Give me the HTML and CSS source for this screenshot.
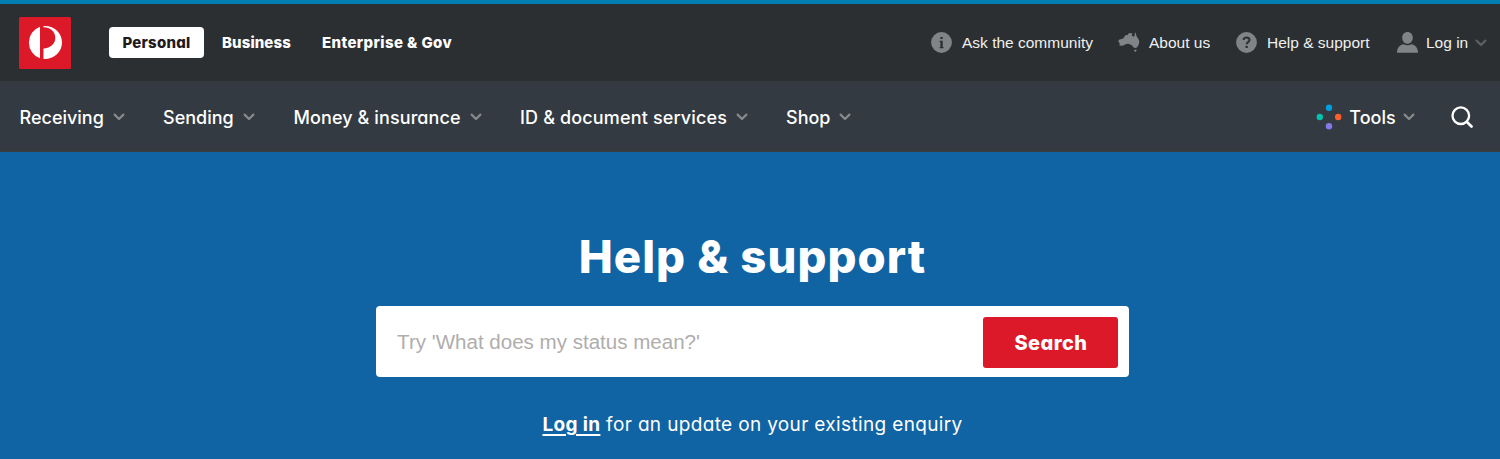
FILE: index.html
```html
<!DOCTYPE html>
<html lang="en">
<head>
<meta charset="utf-8">
<title>Help &amp; support</title>
<link rel="stylesheet" href="styles.css">
</head>
<body>
<svg class="defs" width="0" height="0" aria-hidden="true">
  <symbol id="chevron" viewBox="0 0 12 8"><path d="M1.600 1.600 6 6l4.400-4.400" fill="none" stroke="currentColor" stroke-width="2.200" stroke-linecap="round" stroke-linejoin="round"/></symbol>
</svg>
<header>
  <div class="topbar">
    <a class="logo"><svg width="52" height="52" viewBox="0 0 52 52"><rect width="52" height="52" rx="1.500" fill="#dc1928"/><path fill="#fff" d="M21 9.700a16.800 16.800 0 0 0 0 31.600ZM24.500 9C35 8.300 43 16 43 25.500S35 42.500 24.500 42.100V31.500C31.500 31 36.300 27 36.300 21 36.300 14.500 31.500 10.300 24.500 10.300Z"/></svg></a>
    <nav class="segments">
      <a class="segment active"><span>Personal</span></a>
      <a class="segment business"><span>Business</span></a>
      <a class="segment enterprise"><span>Enterprise &amp; Gov</span></a>
    </nav>
    <div class="links">
      <a class="link community"><svg width="21" height="21" viewBox="0 0 21 21"><circle cx="10.500" cy="10.500" r="10.400" fill="#808487"/><g fill="#2b2f32"><rect x="9.300" y="5" width="2.400" height="2.100" rx=".5"/><path d="M8.700 8.700h3v6.200h.8v1.300H8.700v-1.300h.7V10h-.7z"/></g></svg><span>Ask the community</span></a>
      <a class="link about"><svg width="22" height="21" viewBox="0 0 22 21"><path fill="#808487" d="M.3 9 1 7.800 3.500 7 5.600 6.200 6.500 4.300 8.300 2.800 9.500 3.300 10.500 1.500 12.200 1 14.400 1.500 13.700 3.600 15.500 4.700 16.600 3.800 16.900.8 17.700.8 18.600 4.500 20.200 6.500 21.300 9.300 21 11.800 19.300 15.200 17.300 16 15.200 15.200 14 13.200 12.500 12.800 10.600 11.800 8 12.100 5.500 13.500 1.600 13.800 1.600 11.600ZM15.900 17.800h2.800l-.5 1.500-.9.800-.9-.8Z"/></svg><span>About us</span></a>
      <a class="link help"><svg width="21" height="21" viewBox="0 0 21 21"><circle cx="10.500" cy="10.500" r="10.400" fill="#808487"/><path d="M7.600 8.100c0-3.700 5.900-3.500 5.900-.1 0 2.100-2.800 2.100-2.800 4.200" fill="none" stroke="#2b2f32" stroke-width="2"/><rect x="9.500" y="13.800" width="2.300" height="2.200" rx=".6" fill="#2b2f32"/></svg><span>Help &amp; support</span></a>
      <a class="link login"><svg width="21" height="21" viewBox="0 0 21 21"><path fill="#808487" d="M10.500 0c3.100 0 5.300 2.400 5.300 5.700s-2.200 6-5.300 6-5.300-2.700-5.300-6S7.400 0 10.500 0ZM0 20.800C0 16 2.500 13 6.500 12.300c2.500 1.300 5.500 1.300 8 0C18.500 13 21 16 21 20.800Z"/></svg><span>Log in</span><svg class="chevron" width="12" height="8"><use href="#chevron"/></svg></a>
    </div>
  </div>
  <div class="mainbar">
    <nav class="menu">
      <a class="item receiving"><span>Receiving</span><svg class="chevron" width="12" height="8"><use href="#chevron"/></svg></a>
      <a class="item sending"><span>Sending</span><svg class="chevron" width="12" height="8"><use href="#chevron"/></svg></a>
      <a class="item money"><span>Money &amp; insurance</span><svg class="chevron" width="12" height="8"><use href="#chevron"/></svg></a>
      <a class="item docs"><span>ID &amp; document services</span><svg class="chevron" width="12" height="8"><use href="#chevron"/></svg></a>
      <a class="item shop"><span>Shop</span><svg class="chevron" width="12" height="8"><use href="#chevron"/></svg></a>
    </nav>
    <div class="utilities">
      <a class="item tools"><svg width="26" height="26" viewBox="0 0 26 26"><circle cx="13" cy="3.800" r="3.200" fill="#009dde"/><circle cx="3.800" cy="13" r="3.200" fill="#00c3ad"/><circle cx="22.200" cy="13" r="3.200" fill="#ff602b"/><circle cx="13" cy="22.200" r="3.200" fill="#8578e8"/></svg><span>Tools</span><svg class="chevron" width="12" height="8"><use href="#chevron"/></svg></a>
      <a class="search-toggle"><svg width="22" height="22" viewBox="0 0 22 22" fill="none" stroke="#fff" stroke-width="2.300"><circle cx="9.800" cy="9.700" r="8.300"/><path d="m15.700 15.700 4.800 4.800" stroke-width="2.700" stroke-linecap="round"/></svg></a>
    </div>
  </div>
</header>
<main class="hero">
  <h1>Help &amp; support</h1>
  <form class="search">
    <input class="query" type="text" placeholder="Try 'What does my status mean?'">
    <button class="submit" type="button">Search</button>
  </form>
  <p class="enquiry"><a>Log in</a> for an update on your existing enquiry</p>
</main>
</body>
</html>
```
FILE: styles.css
```css
* { box-sizing: border-box; }
body {
  margin: 0;
  height: 459px;
  display: flex;
  flex-direction: column;
  overflow: hidden;
  background: #1164a4;
  color: #fff;
  font-family: Inter, "Open Sans", sans-serif;
  font-feature-settings: "cv11";
}
.defs { position: absolute; }
svg { display: block; flex: none; }
a { color: inherit; white-space: nowrap; }
.topbar {
  height: 81px;
  display: flex;
  align-items: center;
  padding: 0 14px 0 19px;
  border-top: 4px solid #007eb1;
  background: #2b2f32;
}
.segments { display: flex; margin-left: 38px; font-size: 15px; font-weight: 800; letter-spacing: 0.25px; }
.segment { height: 31px; line-height: 32px; }
.segment.active { width: 95px; text-align: center; border-radius: 4px; background: #fff; color: #1f1a1c; }
.segment.business { width: 100px; margin-left: 18px; letter-spacing: 0.1px; }
.segment.enterprise { letter-spacing: 0.4px; }
.links { display: flex; margin-left: auto; font: 15.500px "Liberation Sans", Arial, sans-serif; color: #f0f0f0; }
.link { display: flex; align-items: center; }
.link.community { width: 187px; gap: 10px; }
.link.about { width: 118px; gap: 9px; }
.link.help { width: 161px; gap: 10px; }
.link.login { width: 89px; gap: 8px; }
.link.login span { padding-top: 1px; }
.link.login .chevron { color: #5c6063; margin-left: -1px; }
.mainbar {
  height: 71px;
  display: flex;
  align-items: center;
  justify-content: space-between;
  padding: 1px 27px 0 19.500px;
  background: #343a41;
  border-bottom: 1px solid #3a3d40;
}
.menu { display: flex; font-size: 18px; font-weight: 500; }
.item { display: flex; align-items: center; justify-content: space-between; }
.item span { padding-top: 2px; }
.chevron { color: #85898c; }
.receiving { width: 105px; margin-right: 38.500px; }
.sending { width: 92px; margin-right: 38.500px; }
.money { width: 188px; margin-right: 38.500px; letter-spacing: 0.1px; }
.docs { width: 228px; margin-right: 38px; letter-spacing: 0.15px; }
.shop { width: 65px; }
.utilities { display: flex; align-items: center; gap: 36px; font-size: 18px; font-weight: 500; }
.tools { width: 99px; }
.hero { display: flex; flex-direction: column; align-items: center; padding: 77px 0 0 5px; }
h1 { margin: 0; font-size: 45.500px; line-height: 55px; font-weight: 800; letter-spacing: 1.050px; white-space: nowrap; }
.search {
  width: 753px;
  height: 71px;
  margin-top: 22px;
  padding: 11px 10.600px;
  display: flex;
  background: #fff;
  border-radius: 4px;
}
.query {
  flex: 1;
  min-width: 0;
  border: 0;
  outline: 0;
  padding: 0 10.500px;
  background: none;
  font: 20.550px "Liberation Sans", Arial, sans-serif;
}
.query::placeholder { color: #b0adad; opacity: 1; }
.submit {
  width: 135px;
  height: 50.500px;
  padding: 2px 0 0;
  border: 0;
  border-radius: 3px;
  background: #dc1928;
  color: #fff;
  font: 800 20px Inter, sans-serif;
  font-feature-settings: "cv11";
  letter-spacing: 0.4px;
}
.enquiry { margin: 35px 0 0; font-size: 19px; line-height: 26px; letter-spacing: 0.35px; white-space: nowrap; }
.enquiry a { font-weight: 700; text-decoration: underline; text-decoration-thickness: 2px; text-underline-offset: 3px; }
```
